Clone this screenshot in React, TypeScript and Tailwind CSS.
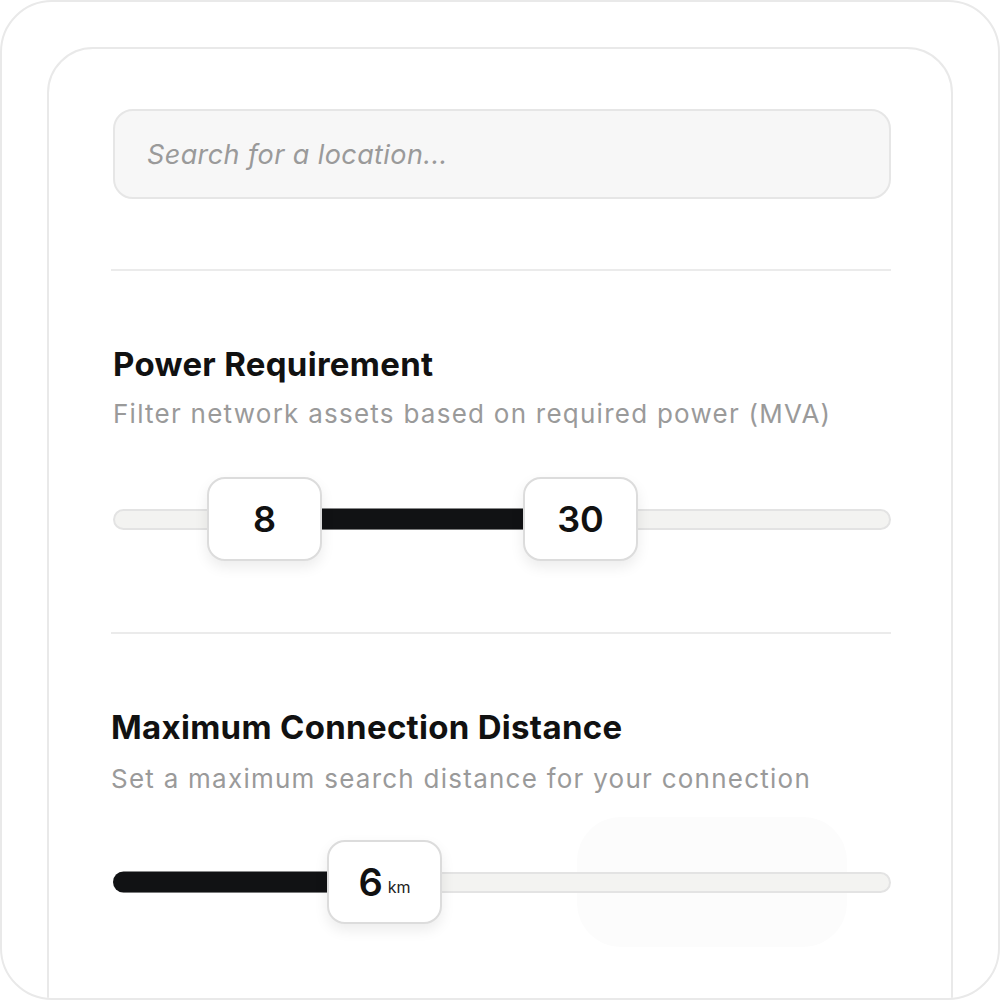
import React from "react";

function Thumb({ children }: { children: React.ReactNode }) {
  return (
    <div className="absolute top-1/2 -translate-y-1/2 w-[115px] h-[84px] bg-white border-2 border-[#dcdcdc] rounded-[18px] shadow-[0_6px_14px_rgba(0,0,0,0.08)] flex items-center justify-center">
      {children}
    </div>
  );
}

export default function App() {
  return (
    <div className="w-[1000px] h-[1000px] bg-white" style={{ fontFamily: "Inter, 'Noto Sans', sans-serif" }}>
      <div className="w-full h-full border-2 border-[#e9e9e9] rounded-[52px] overflow-hidden pt-[45px] px-[45px]">
        <div className="h-[1100px] border-2 border-[#e9e9e9] rounded-[46px] pt-[60px] pl-[64px] pr-[60px]">
          {/* Search */}
          <div className="h-[90px] bg-[#f7f7f7] border-2 border-[#e6e6e6] rounded-[20px] flex items-center px-[32px] pt-[3px]">
            <span className="italic text-[27px] tracking-[0.4px] text-[#9a9a9a]">Search for a location...</span>
          </div>

          <div className="h-[2px] bg-[#ebebeb] mt-[70px] -ml-[2px]" />

          {/* Power requirement */}
          <div className="mt-[73px]">
            <h2 className="text-[33px] font-bold tracking-[0.3px] text-[#111] leading-[40px]">Power Requirement</h2>
            <p className="text-[26px] tracking-[1.25px] text-[#9a9a9a] leading-[34px] mt-[13px]">
              Filter network assets based on required power (MVA)
            </p>
          </div>

          <div className="relative h-[84px] mt-[46px] flex items-center">
            <div className="w-full h-[21px] bg-[#f3f3f1] border-2 border-[#e3e3e3] rounded-full" />
            <div className="absolute left-[209px] w-[202px] h-[21px] top-1/2 -translate-y-1/2 bg-[#111214]" />
            <div className="absolute left-[94px] top-0 h-full">
              <Thumb>
                <span className="text-[36px] font-semibold text-[#111]">8</span>
              </Thumb>
            </div>
            <div className="absolute left-[410px] top-0 h-full">
              <Thumb>
                <span className="text-[36px] font-semibold text-[#111]">30</span>
              </Thumb>
            </div>
          </div>

          <div className="h-[2px] bg-[#ebebeb] mt-[71px] -ml-[2px]" />

          {/* Max connection distance */}
          <div className="mt-[73px] -ml-[2px]">
            <h2 className="text-[33px] font-bold tracking-[0.3px] text-[#111] leading-[40px]">Maximum Connection Distance</h2>
            <p className="text-[26px] tracking-[1.25px] text-[#9a9a9a] leading-[34px] mt-[15px]">
              Set a maximum search distance for your connection
            </p>
          </div>

          <div className="relative h-[84px] mt-[44px] flex items-center">
            <div className="absolute left-[464px] top-1/2 -translate-y-1/2 w-[270px] h-[130px] rounded-[44px] bg-[#fcfcfc]" />
            <div className="relative w-full h-[21px] bg-[#f3f3f1] border-2 border-[#e3e3e3] rounded-full" />
            <div className="absolute left-0 w-[225px] h-[21px] top-1/2 -translate-y-1/2 bg-[#111214] rounded-l-full" />
            <div className="absolute left-[214px] top-0 h-full">
              <Thumb>
                <span className="text-[38px] font-semibold text-[#111] leading-none">6</span>
                <span className="text-[16px] text-[#222] ml-[5px] mt-[10px]">km</span>
              </Thumb>
            </div>
          </div>
        </div>
      </div>
    </div>
  );
}
